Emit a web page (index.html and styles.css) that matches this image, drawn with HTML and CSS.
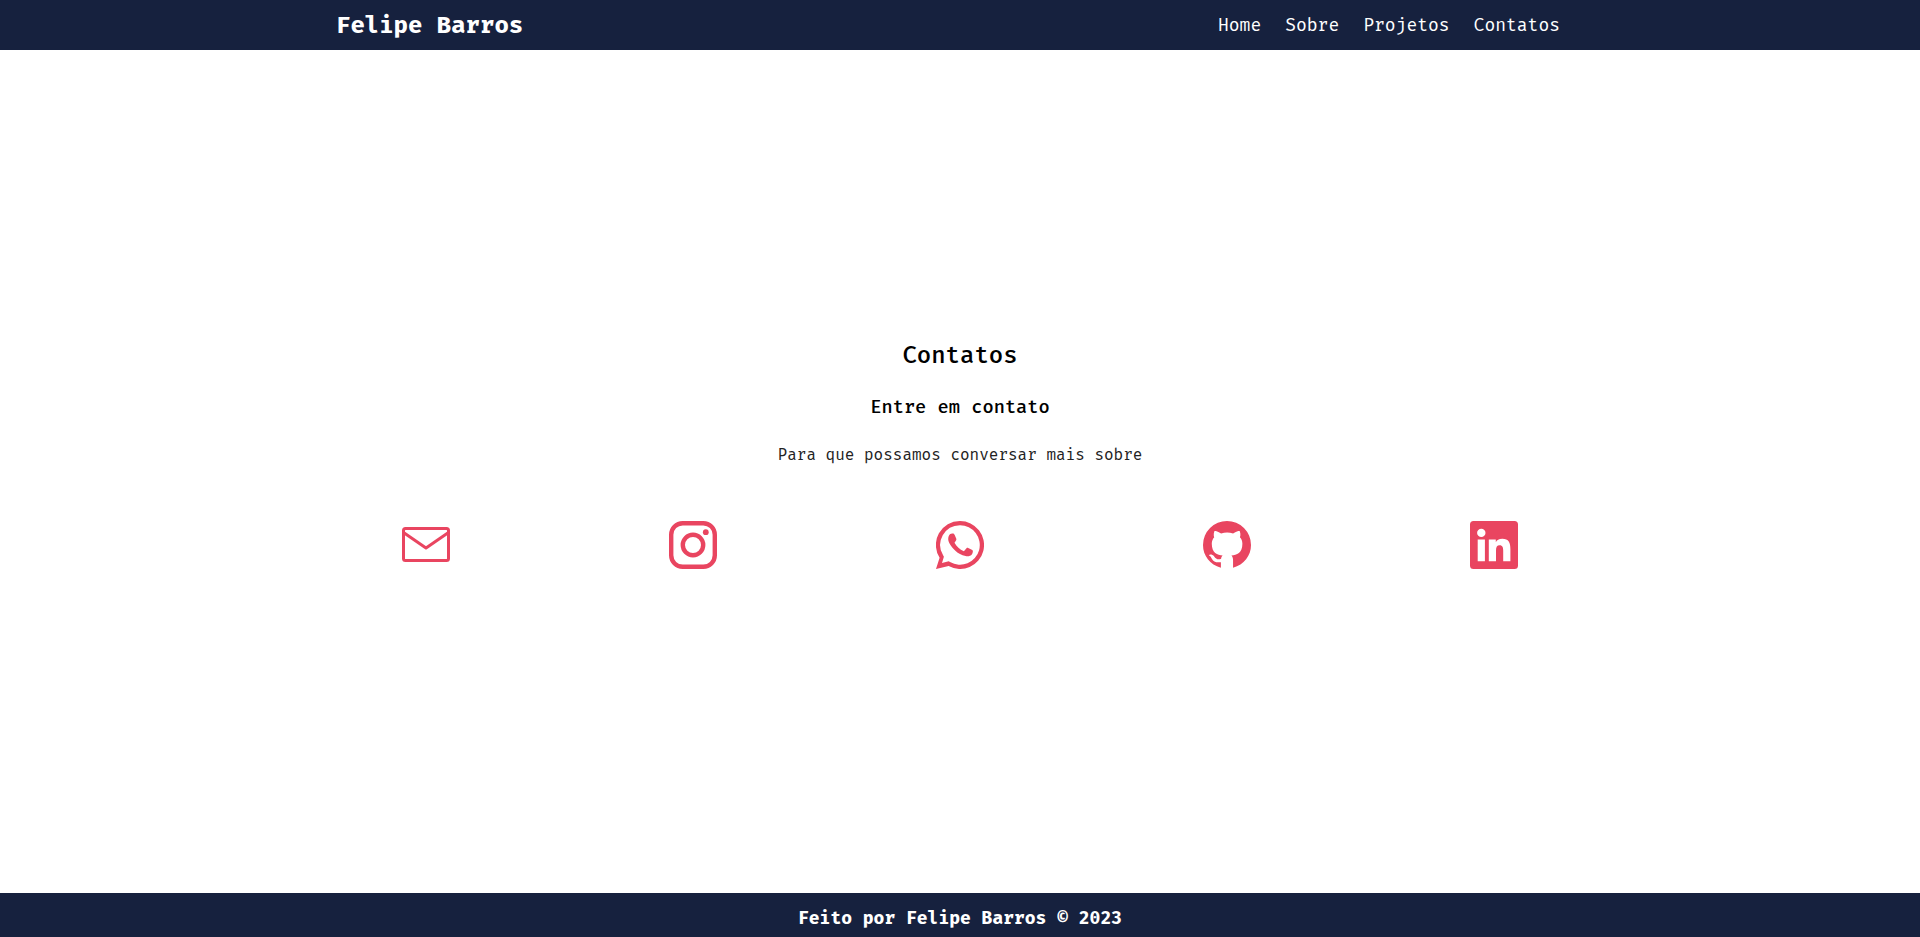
FILE: index.html
```html
<!DOCTYPE html>
<html lang="pt-BR">
<head>
<meta charset="utf-8">
<meta name="viewport" content="width=device-width, initial-scale=1">
<title>Contatos | Felipe Barros</title>
<link rel="stylesheet" href="styles.css">
</head>
<body>
<header class="header">
  <div class="header-inner">
    <h1 class="brand">Felipe Barros</h1>
    <nav>
      <ul class="menu">
        <li><a href="#home">Home</a></li>
        <li><a href="#sobre">Sobre</a></li>
        <li><a href="#projetos">Projetos</a></li>
        <li><a href="#contatos">Contatos</a></li>
      </ul>
    </nav>
  </div>
</header>
<main class="contact" id="contatos">
  <h2 class="title">Contatos</h2>
  <h3 class="subtitle">Entre em contato</h3>
  <p class="lead">Para que possamos conversar mais sobre</p>
  <ul class="links">
    <li><a href="#email" aria-label="E-mail"><svg class="icon" viewBox="0 0 48 48" fill="none" stroke="currentColor" stroke-width="3"><rect x="1.5" y="7.500" width="45" height="32" rx="2"/><path d="M1.500 11.500L24 27L46.500 11.500" stroke-linejoin="round"/></svg></a></li>
    <li><a href="#instagram" aria-label="Instagram"><svg class="icon" viewBox="0 0 48 48" fill="none" stroke="currentColor" stroke-width="4.400"><rect x="2.200" y="2.200" width="43.600" height="43.600" rx="11.500"/><circle cx="24" cy="24" r="10.200"/><circle cx="36.800" cy="11.200" r="2.900" fill="currentColor" stroke="none"/></svg></a></li>
    <li><a href="#whatsapp" aria-label="WhatsApp"><svg class="icon" viewBox="0 0 48 48" fill="currentColor"><path fill-rule="evenodd" d="M24 0A24 24 0 1 1 12.600 45.100L0 48L3.600 36.800A24 24 0 0 1 24 0ZM24 4.200A19.800 19.800 0 0 0 7.100 34.300L7.900 35.700L6 42.100L12.700 40.300L14 41.100A19.800 19.800 0 1 0 24 4.200Z"/><path d="M16.700 12.500C17.700 12.400 18.300 13 18.700 14L20.300 17.800C20.600 18.800 20.200 19.500 18.500 21.800C20.800 25.900 23.600 28.500 27.900 30.200L30.500 27.200C31 26.700 31.600 26.700 32.200 27L36.300 29.100C37.300 29.700 36.900 31.900 36 33.200C34.700 35 31.900 35.800 29.600 35.100C21.200 32.800 17 28.200 13.400 22.200C11.500 18.900 12.100 15 14.200 13.100C14.900 12.500 15.800 12.400 16.700 12.500Z"/></svg></a></li>
    <li><a href="#github" aria-label="GitHub"><svg class="icon" viewBox="0 0 48 48" fill="currentColor"><path d="M24 0A24 24 0 0 0 0 24C0 34.700 7 43.800 17.900 46.700V41.200C13 41.800 10.500 40.700 9 38C8.200 36.400 7.500 35 5.800 34.200C6.500 33 9.600 33.200 11.200 35.400C12.800 38 15.300 38.900 18.100 37.700C18.300 36.300 18.900 35.200 19.700 34.600c-5.340-.6-10.920-2.670-10.920-11.850 0-2.610.93-4.770 2.460-6.450-.24-.6-1.080-3.060.24-6.360 0 0 2.010-.63 6.600 2.460 1.920-.54 3.960-.81 6-.81s4.080.27 6 .81c4.590-3.120 6.600-2.460 6.600-2.460 1.320 3.300.48 5.760.24 6.360 1.530 1.680 2.460 3.810 2.460 6.450 0 9.210-5.610 11.250-10.950 11.850 .87.75 1.620 2.190 1.620 4.440V46.700C41 43.800 48 34.700 48 24A24 24 0 0 0 24 0Z"/></svg></a></li>
    <li><a href="#linkedin" aria-label="LinkedIn"><svg class="icon" viewBox="0 0 48 48" fill="currentColor"><path fill-rule="evenodd" d="M3.500 0H44.500A3.500 3.500 0 0 1 48 3.500V44.500A3.500 3.500 0 0 1 44.500 48H3.500A3.500 3.500 0 0 1 0 44.500V3.500A3.500 3.500 0 0 1 3.500 0ZM11.300 7.700A4.200 4.200 0 1 0 11.300 16.100A4.200 4.200 0 1 0 11.300 7.700ZM7.700 18.500V40.200H14.900V18.500ZM18.800 18.500V40.200H26V29.400C26 26.100 26.900 24.300 29.700 24.300C32.500 24.300 33.200 26.600 33.200 29.600V40.200H40.400V28.200C40.400 21.800 38.800 17.800 32.300 17.800C28.900 17.800 26.800 19.300 25.800 21.300V18.500Z"/></svg></a></li>
  </ul>
</main>
<footer class="footer">Feito por Felipe Barros © 2023</footer>
</body>
</html>
```
FILE: styles.css
```css
* { box-sizing: border-box; margin: 0; padding: 0; }

body {
  min-height: 100vh;
  display: flex;
  flex-direction: column;
  background: #fff;
  color: #000;
  font-family: "Fira Mono", "Fira Code", "Liberation Mono", monospace;
}

ul { list-style: none; }

.header {
  background: #16213e;
  color: #fff;
}

.header-inner {
  width: 65%;
  min-height: 50px;
  margin: 0 auto;
  padding-right: 24px;
  display: flex;
  align-items: center;
  justify-content: space-between;
}

.brand {
  font-size: 24px;
  line-height: 32px;
  font-weight: 600;
}

.menu {
  display: flex;
  gap: 24px;
  font-size: 18px;
  line-height: 24px;
}

.menu a {
  color: inherit;
  text-decoration: none;
}

.contact {
  flex: 1;
  display: flex;
  flex-direction: column;
  align-items: center;
  justify-content: center;
  padding-bottom: 36px;
  text-align: center;
}

.title {
  margin-bottom: 24px;
  font-size: 24px;
  line-height: 32px;
  font-weight: 500;
}

.subtitle {
  margin-bottom: 24px;
  line-height: 24px;
  font-weight: 500;
}

.lead {
  margin-bottom: 54px;
  color: #222;
  font-size: 16px;
  line-height: 24px;
  font-weight: 300;
}

.links {
  width: 69.5%;
  display: grid;
  grid-template-columns: repeat(5, 1fr);
  justify-items: center;
}

.links a {
  display: block;
  color: #e94560;
}

.icon {
  display: block;
  width: 48px;
  height: 48px;
}

.footer {
  padding: 13px 16px 7px;
  background: #16213e;
  color: #fff;
  font-size: 18px;
  line-height: 24px;
  font-weight: 600;
  text-align: center;
}
```
